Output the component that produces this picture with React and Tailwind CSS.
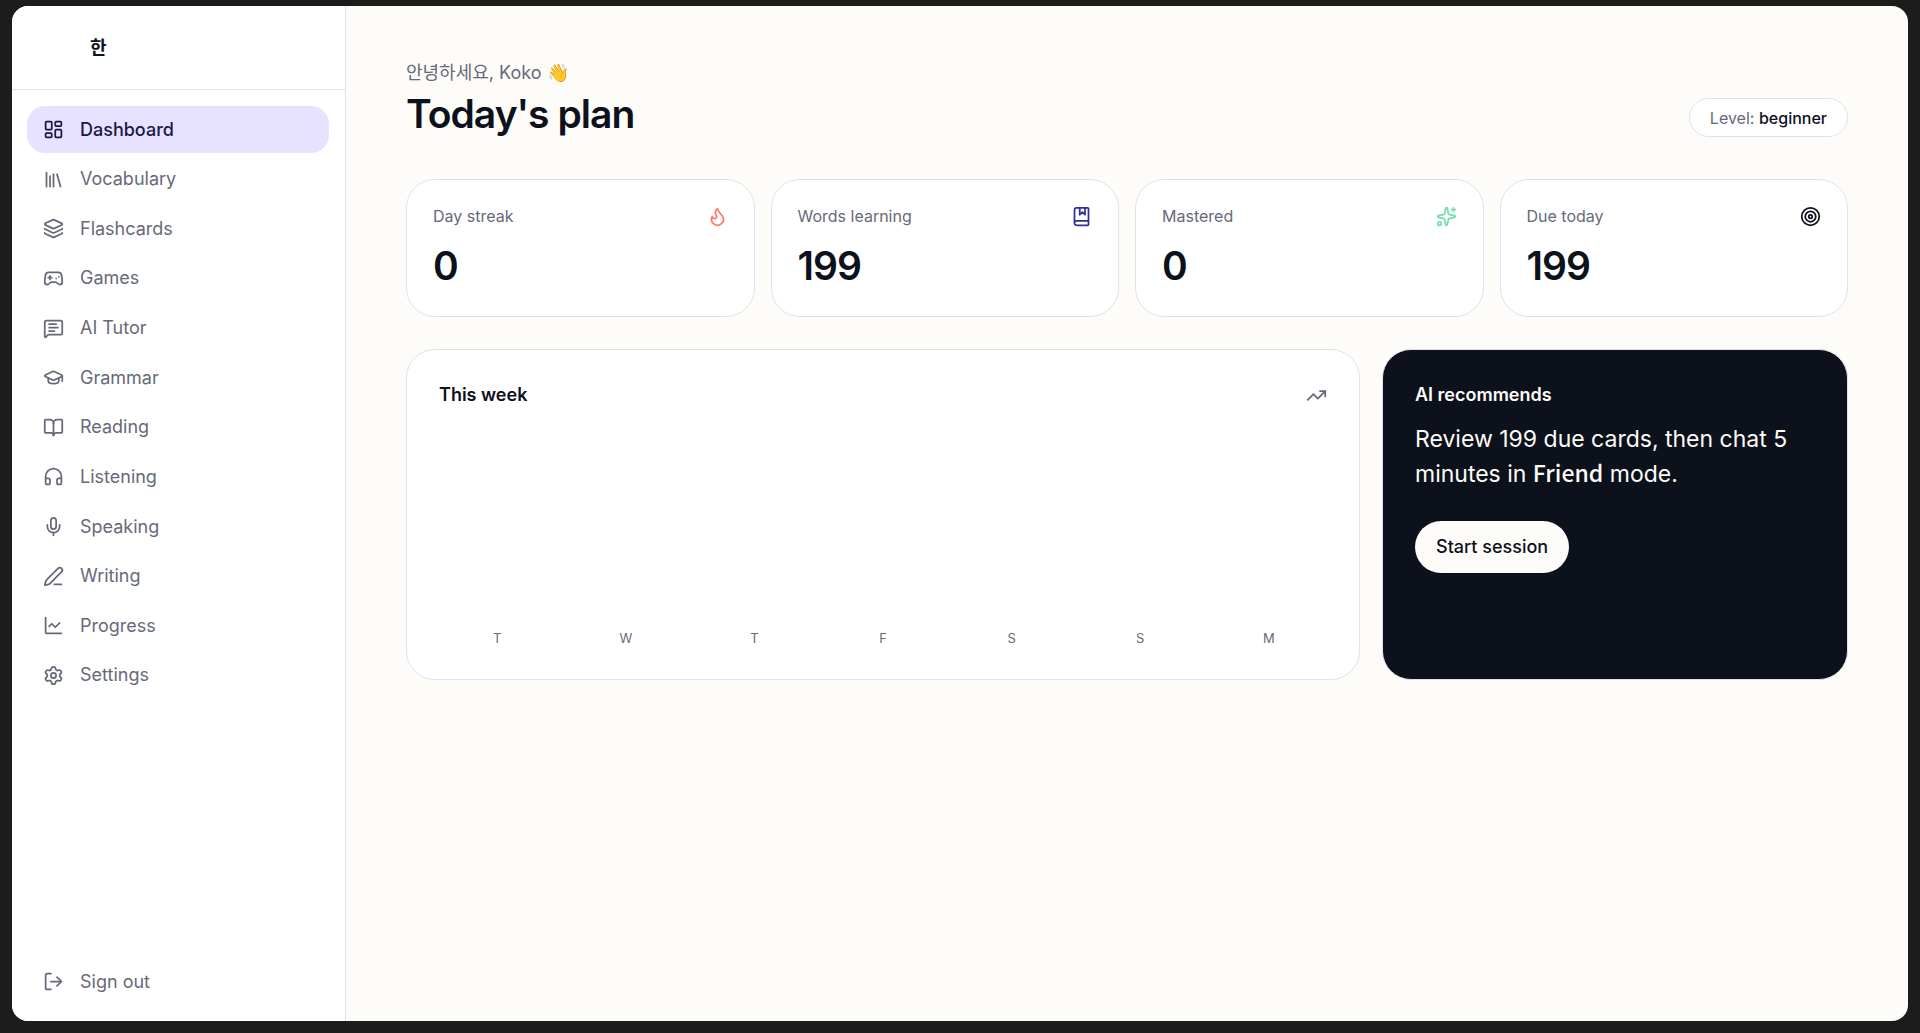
import {
  BookMarked,
  BookOpen,
  ChartLine,
  Flame,
  Gamepad2,
  GraduationCap,
  Headphones,
  Layers,
  LayoutDashboard,
  Library,
  LogOut,
  MessageSquareText,
  Mic,
  PenLine,
  Settings,
  Sparkles,
  Target,
  TrendingUp,
} from "lucide-react";
import clsx from "clsx";

const navItems = [
  { label: "Dashboard", icon: LayoutDashboard },
  { label: "Vocabulary", icon: Library },
  { label: "Flashcards", icon: Layers },
  { label: "Games", icon: Gamepad2 },
  { label: "AI Tutor", icon: MessageSquareText },
  { label: "Grammar", icon: GraduationCap },
  { label: "Reading", icon: BookOpen },
  { label: "Listening", icon: Headphones },
  { label: "Speaking", icon: Mic },
  { label: "Writing", icon: PenLine },
  { label: "Progress", icon: ChartLine },
  { label: "Settings", icon: Settings },
];

const stats = [
  { label: "Day streak", value: 0, icon: Flame, color: "text-[#ff7a66]" },
  { label: "Words learning", value: 199, icon: BookMarked, color: "text-[#2d2f9b]" },
  { label: "Mastered", value: 0, icon: Sparkles, color: "text-[#73dcb0]" },
  { label: "Due today", value: 199, icon: Target, color: "text-[#0d111c]" },
];

const week = [
  { day: "T", minutes: 0 },
  { day: "W", minutes: 0 },
  { day: "T", minutes: 0 },
  { day: "F", minutes: 0 },
  { day: "S", minutes: 0 },
  { day: "S", minutes: 0 },
  { day: "M", minutes: 0 },
];

function Sidebar({ active }) {
  return (
    <aside className="flex w-[334px] shrink-0 flex-col border-r border-[#e0e1eb] bg-white">
      <div className="flex h-[84px] items-center border-b border-[#e0e1eb] px-[78px]">
        <a href="#home" className="text-lg font-semibold">
          한
        </a>
      </div>

      <nav className="flex h-[625px] flex-col justify-between p-4 pl-[15px]">
        {navItems.map(({ label, icon: Icon }) => (
          <a
            key={label}
            href={`#${label.toLowerCase().replace(" ", "-")}`}
            className={clsx(
              "flex h-[47px] items-center gap-4 rounded-[18px] px-4 text-lg",
              label === active
                ? "bg-[#e7e2ff] font-medium text-[#191847]"
                : "text-[#666a78]"
            )}
          >
            <Icon size={21} strokeWidth={2} />
            {label}
          </a>
        ))}
      </nav>

      <div className="mt-auto p-4 pl-[15px]">
        <button
          type="button"
          className="flex h-[47px] w-full items-center gap-4 rounded-[18px] px-4 text-lg text-[#666a78]"
        >
          <LogOut size={21} strokeWidth={2} />
          Sign out
        </button>
      </div>
    </aside>
  );
}

function StatCard({ label, value, icon: Icon, color }) {
  return (
    <div className="rounded-[29px] border border-[#e0e1eb] bg-white px-[26px] pt-6 pb-[26px]">
      <div className="flex items-center justify-between">
        <span className="text-base text-[#666a78]">{label}</span>
        <Icon size={21} strokeWidth={2} className={color} />
      </div>
      <div className="mt-[14px] text-[39px] leading-[48px] font-semibold tracking-tight">
        {value}
      </div>
    </div>
  );
}

function WeekChart() {
  return (
    <section className="col-span-2 rounded-[29px] border border-[#e0e1eb] bg-white p-8">
      <div className="flex items-center justify-between">
        <h2 className="text-lg leading-[26px] font-semibold">This week</h2>
        <TrendingUp size={21} strokeWidth={2} className="text-[#666a78]" />
      </div>
      <div className="mt-6 flex h-[215px] items-end gap-3">
        {week.map(({ day, minutes }, i) => (
          <div
            key={i}
            className="flex h-full flex-1 flex-col items-center justify-end gap-2"
          >
            <div
              className="w-full rounded-t-xl bg-[#e7e2ff]"
              style={{ height: `${minutes}%` }}
            />
            <span className="text-[13px] leading-[18px] text-[#666a78]">
              {day}
            </span>
          </div>
        ))}
      </div>
    </section>
  );
}

function Recommendation() {
  return (
    <section className="rounded-[29px] border border-[#e0e1eb] bg-[#0d111c] p-8 text-[#fdfcf8]">
      <h2 className="text-lg leading-[26px] font-semibold">AI recommends</h2>
      <p className="mt-[14px] text-[23px] leading-[35px]">
        Review 199 due cards, then chat 5 minutes in{" "}
        <strong className="font-['Noto_Sans_CJK_KR',sans-serif] leading-none font-medium">
          Friend
        </strong>{" "}
        mode.
      </p>
      <button
        type="button"
        className="mt-[29px] h-[52px] rounded-full bg-[#fdfcf8] px-[21px] text-lg font-medium text-[#0d111c]"
      >
        Start session
      </button>
    </section>
  );
}

export default function App() {
  return (
    <div className="flex min-h-screen bg-[#1c1c1c] px-3 pt-[6px] pb-3 font-['Inter','Noto_Sans_CJK_KR',sans-serif] text-[#0d111c]">
      <div className="flex flex-1 overflow-hidden rounded-2xl bg-[#fdfcf8]">
        <Sidebar active="Dashboard" />

        <main className="min-w-0 flex-1 px-[60px] pt-[53px]">
          {/* Header */}
          <header className="flex items-end justify-between">
            <div>
              <p className="text-lg leading-7 text-[#666a78]">
                안녕하세요, Koko 👋
              </p>
              <h1 className="mt-1 text-[39px] leading-[46px] font-semibold tracking-tight">
                Today's plan
              </h1>
            </div>
            <div className="flex h-[39px] items-center rounded-full border border-[#e0e1eb] bg-white px-5 text-base text-[#666a78]">
              <span>
                Level: <span className="font-medium text-[#0d111c]">beginner</span>
              </span>
            </div>
          </header>

          {/* Stats */}
          <div className="mt-[42px] grid grid-cols-4 gap-4">
            {stats.map((stat) => (
              <StatCard key={stat.label} {...stat} />
            ))}
          </div>

          {/* Week + recommendation */}
          <div className="mt-8 grid grid-cols-3 gap-[22px]">
            <WeekChart />
            <Recommendation />
          </div>
        </main>
      </div>
    </div>
  );
}
